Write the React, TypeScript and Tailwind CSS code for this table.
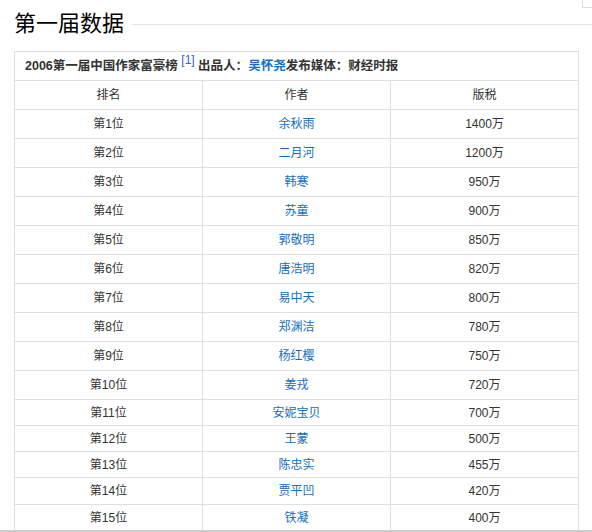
import React from "react";

const rows: [string, string, string][] = [
	["第1位", "余秋雨", "1400万"],
	["第2位", "二月河", "1200万"],
	["第3位", "韩寒", "950万"],
	["第4位", "苏童", "900万"],
	["第5位", "郭敬明", "850万"],
	["第6位", "唐浩明", "820万"],
	["第7位", "易中天", "800万"],
	["第8位", "郑渊洁", "780万"],
	["第9位", "杨红樱", "750万"],
	["第10位", "姜戎", "720万"],
	["第11位", "安妮宝贝", "700万"],
	["第12位", "王蒙", "500万"],
	["第13位", "陈忠实", "455万"],
	["第14位", "贾平凹", "420万"],
	["第15位", "铁凝", "400万"],
];

// the last rows are a bit shorter in the capture
const rowH = (i: number) => (i < 10 ? "h-[29px]" : i === 13 ? "h-[27px]" : "h-[26px]");

export default function App() {
	return (
		<div
			className="relative h-[532px] w-[592px] overflow-hidden bg-white text-[#333]"
			style={{ fontFamily: '"Liberation Sans", "Noto Sans CJK SC", sans-serif' }}
		>
			{/* corner of the box above */}
			<div className="absolute right-0 top-0 h-[8px] w-[10px] border-b border-l border-[#ddd]" />
			<div className="flex items-center pl-[14px] pt-[10px]">
				<h2 className="text-[22px] font-normal leading-[28px] text-black">第一届数据</h2>
				<div className="ml-[8px] h-px flex-1 bg-[#e5e5e5]" />
			</div>
			<div className="mt-[13px] ml-[14px] w-[565px]">
				<table className="w-full table-fixed border-collapse text-[12px]">
					<caption className="h-[29px] border border-b-0 border-[#e0e0e0] px-[10px] text-left text-[12.5px] font-bold leading-[29px] text-[#333]">
						2006第一届中国作家富豪榜{" "}
						<sup className="text-[12px] font-normal text-[#3366cc]">[1]</sup> 出品人：
						<span className="text-[#136ec2]">吴怀尧</span>发布媒体：财经时报
					</caption>
					<thead>
						<tr className="h-[29px]">
							<th className="border border-[#e0e0e0] font-normal">排名</th>
							<th className="border border-[#e0e0e0] font-normal">作者</th>
							<th className="border border-[#e0e0e0] font-normal">版税</th>
						</tr>
					</thead>
					<tbody>
						{rows.map((r, i) => (
							<tr key={r[0]} className={rowH(i)}>
								<td className="border border-[#e0e0e0] text-center">{r[0]}</td>
								<td className="border border-[#e0e0e0] text-center text-[#136ec2]">{r[1]}</td>
								<td className="border border-[#e0e0e0] text-center">{r[2]}</td>
							</tr>
						))}
					</tbody>
				</table>
			</div>
			<div className="absolute bottom-0 left-0 h-[2px] w-full bg-[#ccc]" />
		</div>
	);
}
